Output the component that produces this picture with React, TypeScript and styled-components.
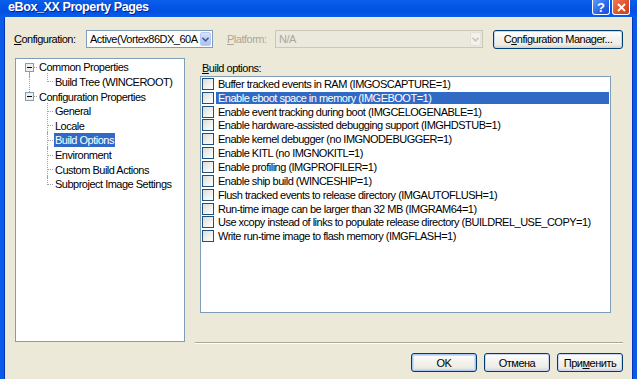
import React from "react";
import styled, { createGlobalStyle } from "styled-components";

const Global = createGlobalStyle`
  html, body { margin: 0; padding: 0; background: #fff; }
  body { font-family: "Liberation Sans", Arial, sans-serif; font-size: 11px; letter-spacing: -0.5px; }
  #root { width: 640px; height: 379px; overflow: hidden; }
`;

const Screen = styled.div`
  width: 640px;
  height: 379px;
  background: #fff;
  overflow: hidden;
`;

const Window = styled.div`
  width: 637px;
  height: 379px;
  display: flex;
  flex-direction: column;
`;

const TitleBar = styled.div`
  height: 17px;
  flex: none;
  display: flex;
  align-items: flex-start;
  background: linear-gradient(to bottom, #0B5FEA 0%, #0556E6 30%, #0152E2 70%, #0A5CEB 100%);
  padding-left: 8px;
  padding-right: 7px;
`;

const TitleText = styled.div`
  flex: 1;
  color: #fff;
  font-family: "Liberation Sans", Arial, sans-serif;
  font-weight: bold;
  font-size: 12.5px;
  letter-spacing: -0.4px;
  line-height: 15px;
  text-shadow: 1px 1px 0 #0A1F8C;
`;

const CaptionButton = styled.div<{ $kind: "help" | "close" }>`
  width: 18px;
  height: 15px;
  margin-left: 2px;
  box-sizing: border-box;
  border: 1px solid #fff;
  border-top: none;
  border-radius: 0 0 3px 3px;
  display: flex;
  align-items: center;
  justify-content: center;
  color: #fff;
  font-weight: bold;
  font-size: 13px;
  letter-spacing: 0;
  background: ${(p) =>
    p.$kind === "help"
      ? "linear-gradient(135deg, #5C9BFF 0%, #2663E6 60%, #1A4FD4 100%)"
      : "linear-gradient(135deg, #EE7A55 0%, #E0522A 55%, #C63E1C 100%)"};
`;

const Body = styled.div`
  flex: 1;
  display: flex;
  flex-direction: column;
  background: #ECE9D8;
  border-left: 4px solid #0A5BE8;
  border-right: 4px solid #0A5BE8;
  box-shadow: inset 1px 0 0 #0636B8, inset -1px 0 0 #0636B8;
  padding: 0 10px;
`;

const ConfigRow = styled.div`
  margin-top: 12px;
  height: 20px;
  display: flex;
  align-items: center;
`;

const FieldLabel = styled.span<{ $w: number; $disabled?: boolean; $ml?: number }>`
  width: ${(p) => p.$w}px;
  margin-left: ${(p) => p.$ml ?? 0}px;
  flex: none;
  color: ${(p) => (p.$disabled ? "#ACA899" : "#000")};
  white-space: nowrap;
`;

const Combo = styled.div<{ $w: number; $disabled?: boolean }>`
  width: ${(p) => p.$w}px;
  height: 18px;
  flex: none;
  box-sizing: border-box;
  border: 1px solid ${(p) => (p.$disabled ? "#C9C7BA" : "#7F9DB9")};
  background: ${(p) => (p.$disabled ? "#EBE9DD" : "#fff")};
  display: flex;
  align-items: stretch;
  padding: 1px;
`;

const ComboText = styled.div<{ $disabled?: boolean }>`
  flex: 1;
  overflow: hidden;
  white-space: nowrap;
  padding-left: 2px;
  line-height: 14px;
  color: ${(p) => (p.$disabled ? "#ACA899" : "#000")};
`;

const ComboButton = styled.div<{ $disabled?: boolean }>`
  width: 11px;
  flex: none;
  box-sizing: border-box;
  border: 1px solid ${(p) => (p.$disabled ? "#E4E2D8" : "#B7CBF5")};
  border-radius: 2px;
  background: ${(p) =>
    p.$disabled ? "#F2F1EA" : "linear-gradient(to bottom, #D6E3FD 0%, #BCD0FA 50%, #ABC3F6 100%)"};
  display: flex;
  align-items: center;
  justify-content: center;
`;

const Btn = styled.div<{ $w: number; $default?: boolean; $ml?: number }>`
  width: ${(p) => p.$w}px;
  height: 19px;
  margin-left: ${(p) => p.$ml ?? 0}px;
  flex: none;
  box-sizing: border-box;
  border: 1px solid #003C74;
  border-radius: 3px;
  background: linear-gradient(to bottom, #FFFFFF 0%, #F5F4EF 40%, #ECEBE4 80%, #D8D3C6 100%);
  box-shadow: ${(p) =>
    p.$default
      ? "inset 0 0 0 1px #A8C4F0, inset 0 0 0 2px #CEDDF6"
      : "inset 0 0 0 1px #C6D6F2"};
  display: flex;
  align-items: center;
  justify-content: center;
  white-space: nowrap;
  color: #000;
`;

const U = styled.span`
  text-decoration: underline;
`;

const MainRow = styled.div`
  margin-top: 9px;
  height: 286px;
  display: flex;
`;

const TreeBox = styled.div`
  width: 170px;
  height: 284px;
  margin-left: 1px;
  flex: none;
  box-sizing: border-box;
  border: 1px solid #7F9DB9;
  background: #fff;
  padding-top: 1px;
`;

const TreeRow = styled.div`
  height: 14.625px;
  display: flex;
  align-items: center;
  white-space: nowrap;
`;

const Gutter = styled.svg`
  flex: none;
  overflow: visible;
  display: block;
`;

const TreeLabel = styled.span<{ $selected?: boolean }>`
  padding: 0 1px;
  line-height: 14px;
  background: ${(p) => (p.$selected ? "#316AC5" : "transparent")};
  color: ${(p) => (p.$selected ? "#fff" : "#000")};
`;

const RightColumn = styled.div`
  flex: 1;
  margin-left: 10px;
  display: flex;
  flex-direction: column;
  padding-top: 3px;
`;

const SectionLabel = styled.div`
  margin-left: 7px;
  height: 14px;
  line-height: 14px;
`;

const ListBox = styled.div`
  margin: 1px 12px 0 5px;
  height: 237px;
  box-sizing: border-box;
  border: 1px solid #7F9DB9;
  background: #fff;
`;

const ListRow = styled.div`
  height: 13.85px;
  display: flex;
  align-items: center;
  padding-left: 1px;
  white-space: nowrap;
`;

const Check = styled.span`
  width: 12px;
  height: 12px;
  flex: none;
  box-sizing: border-box;
  border: 1px solid #1C5180;
  background: linear-gradient(135deg, #DCDCD7 0%, #F2F2EE 60%, #FFFFFF 100%);
`;

const ListLabel = styled.span<{ $selected?: boolean }>`
  flex: 1;
  margin: 0 1px 0 2px;
  padding-left: 2px;
  height: 12px;
  line-height: 12px;
  background: ${(p) => (p.$selected ? "#316AC5" : "transparent")};
  color: ${(p) => (p.$selected ? "#fff" : "#000")};
`;

const Separator = styled.div`
  margin-top: auto;
  height: 0;
  border-top: 1px solid #ACA899;
  border-bottom: 1px solid #fff;
`;

const ButtonRow = styled.div`
  margin-top: 9px;
  display: flex;
  justify-content: flex-end;
`;

const DOT = "#A0A0A0";

function RootGutter({ first }: { first: boolean }) {
  return (
    <Gutter width={22} height={15}>
      {first ? (
        <line x1={13.5} y1={12} x2={13.5} y2={17} stroke={DOT} strokeDasharray="1 1" shapeRendering="crispEdges" />
      ) : (
        <line x1={13.5} y1={-2} x2={13.5} y2={3} stroke={DOT} strokeDasharray="1 1" shapeRendering="crispEdges" />
      )}
      <rect x={9.5} y={3.5} width={8} height={8} fill="#fff" stroke="#8C9CB0" shapeRendering="crispEdges" />
      <rect x={10} y={4} width={7} height={7} fill="#EEF0F0" />
      <line x1={11} y1={7.5} x2={16} y2={7.5} stroke="#000" shapeRendering="crispEdges" />
      <line x1={18} y1={7.5} x2={22} y2={7.5} stroke={DOT} strokeDasharray="1 1" shapeRendering="crispEdges" />
    </Gutter>
  );
}

function ChildGutter({ last, rootLine }: { last: boolean; rootLine: boolean }) {
  return (
    <Gutter width={38} height={15}>
      {rootLine && (
        <line x1={13.5} y1={-1} x2={13.5} y2={16} stroke={DOT} strokeDasharray="1 1" shapeRendering="crispEdges" />
      )}
      <line x1={31.5} y1={-1} x2={31.5} y2={last ? 7.5 : 16} stroke={DOT} strokeDasharray="1 1" shapeRendering="crispEdges" />
      <line x1={32} y1={7.5} x2={38} y2={7.5} stroke={DOT} strokeDasharray="1 1" shapeRendering="crispEdges" />
    </Gutter>
  );
}

function Chevron({ disabled }: { disabled?: boolean }) {
  return (
    <svg width={7} height={5} viewBox="0 0 7 5">
      <polyline points="0.5,0.8 3.5,3.8 6.5,0.8" fill="none" stroke={disabled ? "#C9C7BA" : "#4D6185"} strokeWidth={1.6} />
    </svg>
  );
}

const options = [
  "Buffer tracked events in RAM (IMGOSCAPTURE=1)",
  "Enable eboot space in memory (IMGEBOOT=1)",
  "Enable event tracking during boot (IMGCELOGENABLE=1)",
  "Enable hardware-assisted debugging support (IMGHDSTUB=1)",
  "Enable kernel debugger (no IMGNODEBUGGER=1)",
  "Enable KITL (no IMGNOKITL=1)",
  "Enable profiling (IMGPROFILER=1)",
  "Enable ship build (WINCESHIP=1)",
  "Flush tracked events to release directory (IMGAUTOFLUSH=1)",
  "Run-time image can be larger than 32 MB (IMGRAM64=1)",
  "Use xcopy instead of links to populate release directory (BUILDREL_USE_COPY=1)",
  "Write run-time image to flash memory (IMGFLASH=1)",
];

const configChildren = [
  "General",
  "Locale",
  "Build Options",
  "Environment",
  "Custom Build Actions",
  "Subproject Image Settings",
];

export default function App() {
  return (
    <Screen>
      <Global />
      <Window>
        <TitleBar>
          <TitleText>eBox_XX Property Pages</TitleText>
          <CaptionButton $kind="help">?</CaptionButton>
          <CaptionButton $kind="close">
            <svg width={9} height={9} viewBox="0 0 9 9">
              <path d="M1 1 L8 8 M8 1 L1 8" stroke="#fff" strokeWidth={1.8} />
            </svg>
          </CaptionButton>
        </TitleBar>
        <Body>
          <ConfigRow>
            <FieldLabel $w={72}>
              <U>C</U>onfiguration:
            </FieldLabel>
            <Combo $w={127}>
              <ComboText>Active(Vortex86DX_60A (x86))</ComboText>
              <ComboButton>
                <Chevron />
              </ComboButton>
            </Combo>
            <FieldLabel $w={48} $ml={14} $disabled>
              <U>P</U>latform:
            </FieldLabel>
            <Combo $w={208} $disabled>
              <ComboText $disabled>N/A</ComboText>
              <ComboButton $disabled>
                <Chevron disabled />
              </ComboButton>
            </Combo>
            <Btn $w={130} $ml={10}>
              C<U>o</U>nfiguration Manager...
            </Btn>
          </ConfigRow>
          <MainRow>
            <TreeBox>
              <TreeRow>
                <RootGutter first />
                <TreeLabel>Common Properties</TreeLabel>
              </TreeRow>
              <TreeRow>
                <ChildGutter last rootLine />
                <TreeLabel>Build Tree (WINCEROOT)</TreeLabel>
              </TreeRow>
              <TreeRow>
                <RootGutter first={false} />
                <TreeLabel>Configuration Properties</TreeLabel>
              </TreeRow>
              {configChildren.map((c, i) => (
                <TreeRow key={c}>
                  <ChildGutter last={i === configChildren.length - 1} rootLine={false} />
                  <TreeLabel $selected={c === "Build Options"}>{c}</TreeLabel>
                </TreeRow>
              ))}
            </TreeBox>
            <RightColumn>
              <SectionLabel>
                <U>B</U>uild options:
              </SectionLabel>
              <ListBox>
                {options.map((o, i) => (
                  <ListRow key={o}>
                    <Check />
                    <ListLabel $selected={i === 1}>{o}</ListLabel>
                  </ListRow>
                ))}
              </ListBox>
              <Separator />
            </RightColumn>
          </MainRow>
          <ButtonRow>
            <Btn $w={66} $default>
              OK
            </Btn>
            <Btn $w={66} $ml={7}>
              Отмена
            </Btn>
            <Btn $w={66} $ml={7}>
              При<U>м</U>енить
            </Btn>
          </ButtonRow>
        </Body>
      </Window>
    </Screen>
  );
}
